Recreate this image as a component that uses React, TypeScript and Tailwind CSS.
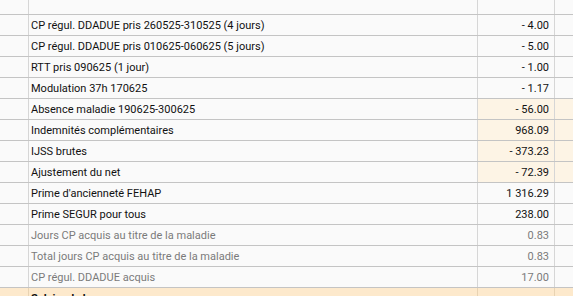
type Row = { label: string; amount: string; tone?: "hl" | "muted" };

const rows: Row[] = [
  { label: "CP régul. DDADUE pris 260525-310525 (4 jours)", amount: "- 4.00" },
  { label: "CP régul. DDADUE pris 010625-060625 (5 jours)", amount: "- 5.00" },
  { label: "RTT pris 090625 (1 jour)", amount: "- 1.00" },
  { label: "Modulation 37h 170625", amount: "- 1.17" },
  { label: "Absence maladie 190625-300625", amount: "- 56.00", tone: "hl" },
  { label: "Indemnités complémentaires", amount: "968.09", tone: "hl" },
  { label: "IJSS brutes", amount: "- 373.23", tone: "hl" },
  { label: "Ajustement du net", amount: "- 72.39", tone: "hl" },
  { label: "Prime d'ancienneté FEHAP", amount: "1 316.29" },
  { label: "Prime SEGUR pour tous", amount: "238.00" },
  { label: "Jours CP acquis au titre de la maladie", amount: "0.83", tone: "muted" },
  { label: "Total jours CP acquis au titre de la maladie", amount: "0.83", tone: "muted" },
  { label: "CP régul. DDADUE acquis", amount: "17.00", tone: "muted" },
];

function Line({ label, amount, tone, first }: Row & { first?: boolean }) {
  const hl = tone === "hl";
  const text = tone === "muted" ? "text-[#7a7a7a]" : "text-[#111111]";
  return (
    <div className={`flex h-[21px] border-b border-[#c4c4c4] ${first ? "" : ""}`}>
      <div className="w-[29px] shrink-0 border-r border-[#d6d6d6] bg-[#fafafa]" />
      <div className={`w-[449px] shrink-0 border-r border-[#d6d6d6] bg-[#fafafa] pl-[2px] flex items-center ${text}`}>
        <span className="leading-none">{label}</span>
      </div>
      <div
        className={`w-[77px] shrink-0 border-r border-[#d6d6d6] pr-[5px] flex items-center justify-end ${text} ${
          hl ? "bg-[#fdf4e5]" : "bg-[#fafafa]"
        }`}
      >
        <span className="leading-none">{amount}</span>
      </div>
      <div className={`flex-1 ${hl ? "bg-[#fdf4e5]" : "bg-[#fafafa]"}`} />
    </div>
  );
}

export default function App() {
  return (
    <div
      className="w-[573px] h-[296px] overflow-hidden bg-[#fafafa] text-[11px]"
      style={{ fontFamily: "Roboto, 'Liberation Sans', sans-serif" }}
    >
      <div className="flex h-[15px] border-b border-[#c4c4c4]">
        <div className="w-[29px] shrink-0 border-r border-[#d6d6d6]" />
        <div className="w-[449px] shrink-0 border-r border-[#d6d6d6]" />
        <div className="w-[77px] shrink-0 border-r border-[#d6d6d6]" />
        <div className="flex-1" />
      </div>
      {rows.map((r) => (
        <Line key={r.label} {...r} />
      ))}
      <div className="flex h-[21px] bg-[#fde9cc] text-[#111111]">
        <div className="w-[29px] shrink-0 border-r border-[#e8d3b3]" />
        <div className="w-[449px] shrink-0 border-r border-[#e8d3b3] pl-[2px] flex items-center font-bold">
          <span className="leading-none">Salaire de base</span>
        </div>
        <div className="w-[77px] shrink-0 border-r border-[#e8d3b3]" />
        <div className="flex-1" />
      </div>
    </div>
  );
}
